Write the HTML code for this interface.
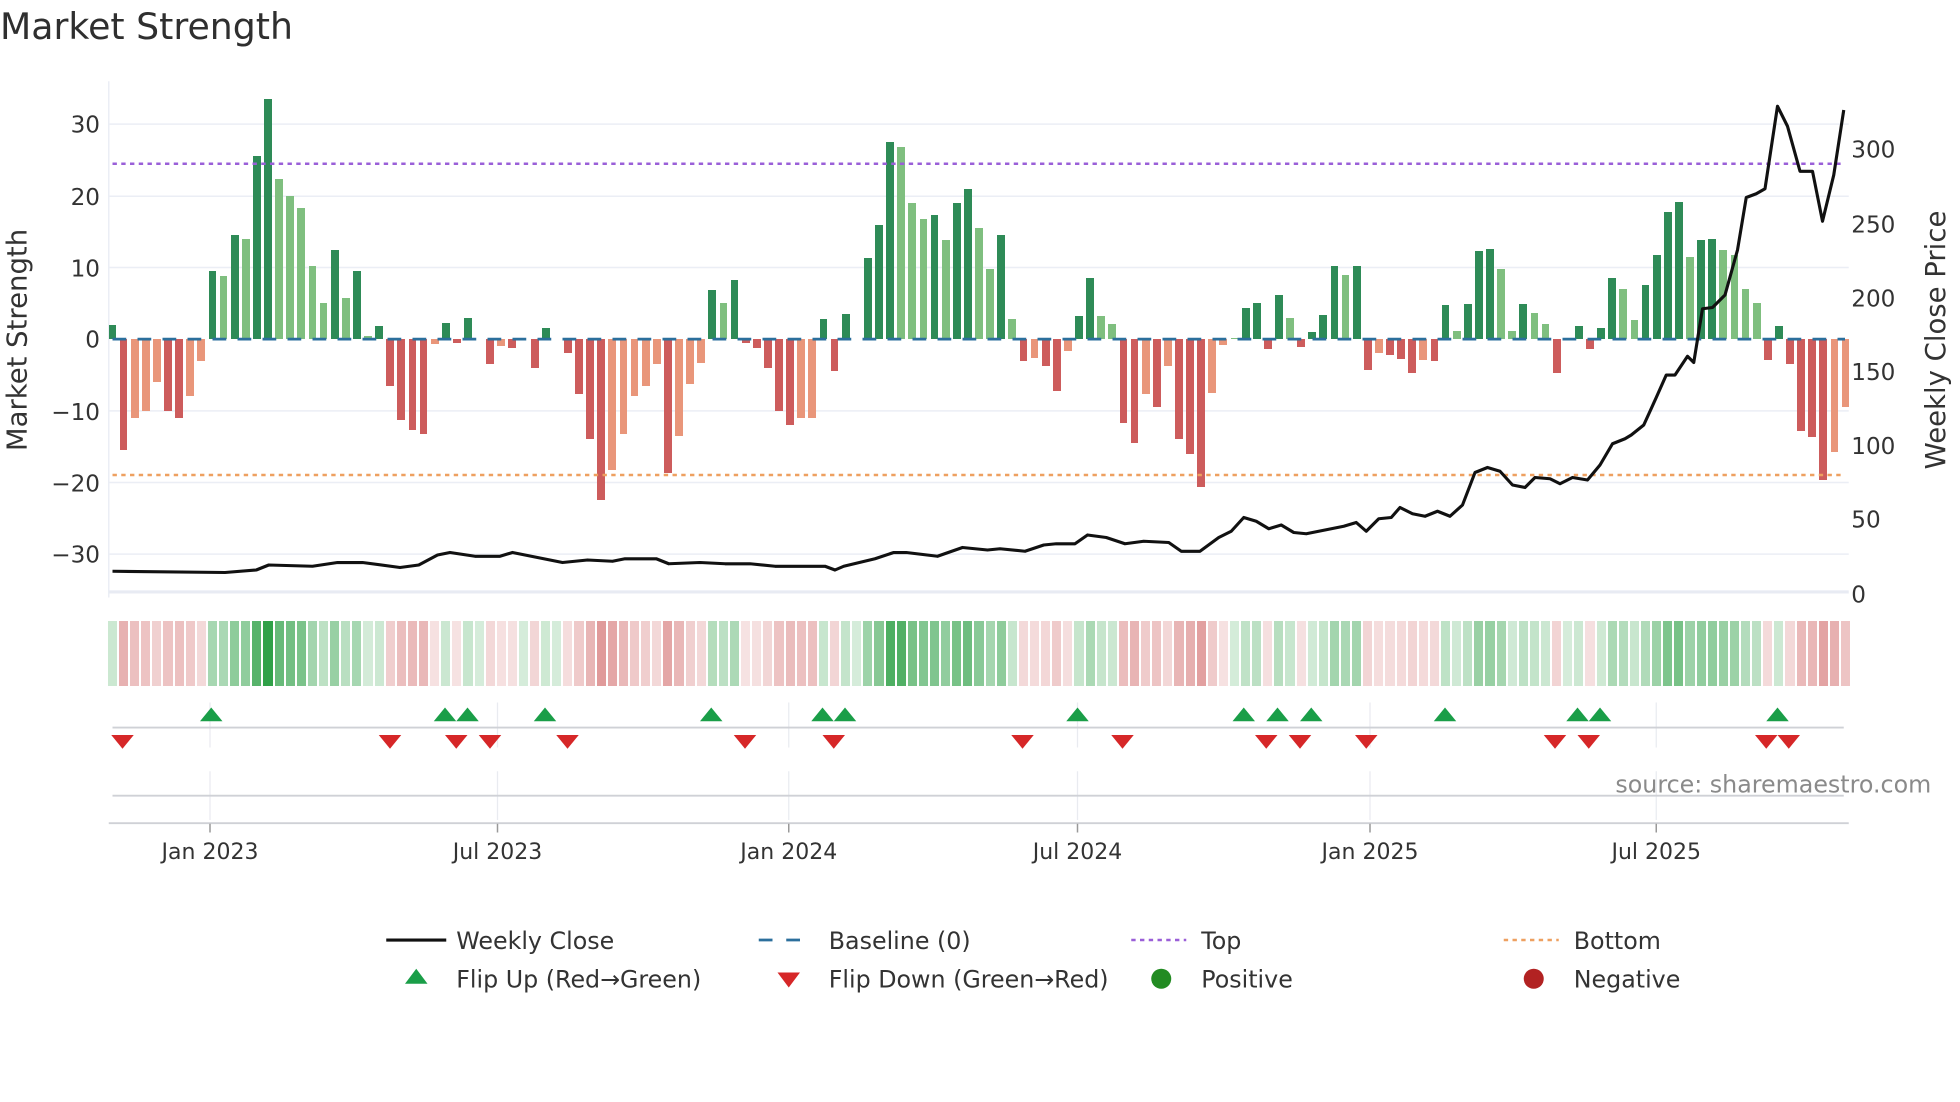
<!DOCTYPE html>
<html><head><meta charset="utf-8"><style>
html,body{margin:0;padding:0;background:#fff;}
#w{position:relative;width:1960px;height:1102px;overflow:hidden;background:#fff;}
svg{position:absolute;left:0;top:0;display:block;font-family:"DejaVu Sans","Liberation Sans",sans-serif;}
#bars{position:absolute;left:106.9px;top:339.1px;width:1743.6px;height:0;display:flex;}
#bars i{flex:1;position:relative;height:0;}
#bars i::after{content:"";position:absolute;left:50%;margin-left:-3.9px;width:7.8px;height:calc(var(--v)*7.1625px);}
#bars i.a::after,#bars i.b::after{bottom:0;}
#bars i.c::after,#bars i.e::after{top:0;}
#bars i.a::after{background:#2e8b57;}
#bars i.b::after{background:#7fbf7f;}
#bars i.c::after{background:#cd5c5c;}
#bars i.e::after{background:#e9967a;}
#bars i.z::after{display:none;}
#strip{position:absolute;left:106.9px;top:621px;width:1743.6px;height:65px;display:flex;}
#strip i{flex:1;margin:0 1px;opacity:calc(0.2 + var(--v)*0.0235);}
#strip i.a,#strip i.b,#strip i.z{background:rgb(46,160,70);}
#strip i.c,#strip i.e{background:rgb(205,92,92);opacity:calc(0.17 + var(--v)*0.02);}
</style></head><body><div id="w">
<svg width="1960" height="1102" viewBox="0 0 1568 881.6" xmlns="http://www.w3.org/2000/svg">
<text x="0" y="31" font-size="29" fill="#2f2f2f">Market Strength</text>
<g stroke="#ebeef5" stroke-width="1.2">
<line x1="87" x2="1479" y1="99.3" y2="99.3"/>
<line x1="87" x2="1479" y1="157" y2="157"/>
<line x1="87" x2="1479" y1="214" y2="214"/>
<line x1="87" x2="1479" y1="328.7" y2="328.7"/>
<line x1="87" x2="1479" y1="386" y2="386"/>
<line x1="87" x2="1479" y1="443.3" y2="443.3"/>
<line x1="87" x2="87" y1="65" y2="478"/>
</g>
<line x1="87" x2="1479" y1="473.5" y2="473.5" stroke="#e8ebf3" stroke-width="2.5"/>
<g font-size="18.5" fill="#333" text-anchor="end">
<text x="80" y="106">30</text><text x="80" y="164">20</text><text x="80" y="221">10</text>
<text x="80" y="278">0</text><text x="80" y="336">−10</text><text x="80" y="393">−20</text><text x="80" y="450">−30</text>
</g>
<g font-size="18.5" fill="#333">
<text x="1481" y="126">300</text><text x="1481" y="186">250</text><text x="1481" y="245">200</text>
<text x="1481" y="304">150</text><text x="1481" y="363">100</text><text x="1481" y="422">50</text><text x="1481" y="482">0</text>
</g>
<text transform="translate(21,272) rotate(-90)" font-size="22" fill="#333" text-anchor="middle">Market Strength</text>
<text transform="translate(1556,272) rotate(-90)" font-size="22" fill="#333" text-anchor="middle">Weekly Close Price</text>
<g stroke="#e9ebf0" stroke-width="1">
<line x1="168" x2="168" y1="562" y2="598"/><line x1="168" x2="168" y1="617" y2="656"/>
<line x1="398" x2="398" y1="562" y2="598"/><line x1="398" x2="398" y1="617" y2="656"/>
<line x1="631" x2="631" y1="562" y2="598"/><line x1="631" x2="631" y1="617" y2="656"/>
<line x1="862" x2="862" y1="562" y2="598"/><line x1="862" x2="862" y1="617" y2="656"/>
<line x1="1096" x2="1096" y1="562" y2="598"/><line x1="1096" x2="1096" y1="617" y2="656"/>
<line x1="1325" x2="1325" y1="562" y2="598"/><line x1="1325" x2="1325" y1="617" y2="656"/>
</g>
<g stroke="#cfd1d6" stroke-width="1.5">
<line x1="90" x2="1475" y1="582" y2="582"/>
<line x1="90" x2="1475" y1="636.5" y2="636.5"/>
<line x1="87" x2="1479" y1="658.5" y2="658.5"/>
</g>
<g stroke="#999" stroke-width="1.2">
<line x1="168" x2="168" y1="659" y2="666"/><line x1="398" x2="398" y1="659" y2="666"/>
<line x1="631" x2="631" y1="659" y2="666"/><line x1="862" x2="862" y1="659" y2="666"/>
<line x1="1096" x2="1096" y1="659" y2="666"/><line x1="1325" x2="1325" y1="659" y2="666"/>
</g>
<g font-size="17.6" fill="#333" text-anchor="middle">
<text x="168" y="687">Jan 2023</text><text x="398" y="687">Jul 2023</text><text x="631" y="687">Jan 2024</text>
<text x="862" y="687">Jul 2024</text><text x="1096" y="687">Jan 2025</text><text x="1325" y="687">Jul 2025</text>
</g>
<text x="1545" y="634" font-size="19" fill="#8a8a8a" text-anchor="end">source: sharemaestro.com</text>
<g font-size="19" fill="#333">
<line x1="309" x2="357" y1="752" y2="752" stroke="#111" stroke-width="2.5"/>
<text x="365" y="759">Weekly Close</text>
<line x1="607" x2="651" y1="752" y2="752" stroke="#2b6f9c" stroke-width="2.2" stroke-dasharray="11,11"/>
<text x="663" y="759">Baseline (0)</text>
<line x1="905" x2="949" y1="752" y2="752" stroke="#9a5fd8" stroke-width="2" stroke-dasharray="3.5,3.5"/>
<text x="961" y="759">Top</text>
<line x1="1203" x2="1247" y1="752" y2="752" stroke="#eea060" stroke-width="2" stroke-dasharray="3.5,3.5"/>
<text x="1259" y="759">Bottom</text>
<polygon points="324,787 342,787 333,775" fill="#1a9e48"/>
<text x="365" y="790">Flip Up (Red→Green)</text>
<polygon points="622,778 640,778 631,790" fill="#d62728"/>
<text x="663" y="790">Flip Down (Green→Red)</text>
<circle cx="929" cy="783" r="8" fill="#228b22"/>
<text x="961" y="790">Positive</text>
<circle cx="1227" cy="783" r="8" fill="#b22222"/>
<text x="1259" y="790">Negative</text>
</g>
</svg>
<div id="bars"><i class="a" style="--v:2"></i><i class="c" style="--v:15.5"></i><i class="e" style="--v:11"></i><i class="e" style="--v:10"></i><i class="e" style="--v:6"></i><i class="c" style="--v:10"></i><i class="c" style="--v:11"></i><i class="e" style="--v:8"></i><i class="e" style="--v:3"></i><i class="a" style="--v:9.5"></i><i class="b" style="--v:8.8"></i><i class="a" style="--v:14.5"></i><i class="b" style="--v:14"></i><i class="a" style="--v:25.5"></i><i class="a" style="--v:33.5"></i><i class="b" style="--v:22.3"></i><i class="b" style="--v:20"></i><i class="b" style="--v:18.3"></i><i class="b" style="--v:10.2"></i><i class="b" style="--v:5"></i><i class="a" style="--v:12.5"></i><i class="b" style="--v:5.8"></i><i class="a" style="--v:9.5"></i><i class="b" style="--v:0.5"></i><i class="a" style="--v:1.8"></i><i class="c" style="--v:6.5"></i><i class="c" style="--v:11.3"></i><i class="c" style="--v:12.7"></i><i class="c" style="--v:13.3"></i><i class="e" style="--v:0.7"></i><i class="a" style="--v:2.2"></i><i class="c" style="--v:0.5"></i><i class="a" style="--v:2.9"></i><i class="z" style="--v:0"></i><i class="c" style="--v:3.5"></i><i class="e" style="--v:0.9"></i><i class="c" style="--v:1.2"></i><i class="z" style="--v:0"></i><i class="c" style="--v:4.1"></i><i class="a" style="--v:1.5"></i><i class="z" style="--v:0"></i><i class="c" style="--v:1.9"></i><i class="c" style="--v:7.7"></i><i class="c" style="--v:14"></i><i class="c" style="--v:22.5"></i><i class="e" style="--v:18.3"></i><i class="e" style="--v:13.3"></i><i class="e" style="--v:8"></i><i class="e" style="--v:6.5"></i><i class="e" style="--v:3.5"></i><i class="c" style="--v:18.7"></i><i class="e" style="--v:13.5"></i><i class="e" style="--v:6.2"></i><i class="e" style="--v:3.4"></i><i class="a" style="--v:6.9"></i><i class="b" style="--v:5.1"></i><i class="a" style="--v:8.3"></i><i class="c" style="--v:0.6"></i><i class="c" style="--v:1.2"></i><i class="c" style="--v:4"></i><i class="c" style="--v:10"></i><i class="c" style="--v:12"></i><i class="e" style="--v:11"></i><i class="e" style="--v:11"></i><i class="a" style="--v:2.8"></i><i class="c" style="--v:4.4"></i><i class="a" style="--v:3.5"></i><i class="z" style="--v:0"></i><i class="a" style="--v:11.3"></i><i class="a" style="--v:16"></i><i class="a" style="--v:27.5"></i><i class="b" style="--v:26.8"></i><i class="b" style="--v:19"></i><i class="b" style="--v:16.8"></i><i class="a" style="--v:17.3"></i><i class="b" style="--v:13.9"></i><i class="a" style="--v:19"></i><i class="a" style="--v:21"></i><i class="b" style="--v:15.5"></i><i class="b" style="--v:9.8"></i><i class="a" style="--v:14.5"></i><i class="b" style="--v:2.8"></i><i class="c" style="--v:3.1"></i><i class="e" style="--v:2.7"></i><i class="c" style="--v:3.7"></i><i class="c" style="--v:7.3"></i><i class="e" style="--v:1.7"></i><i class="a" style="--v:3.2"></i><i class="a" style="--v:8.6"></i><i class="b" style="--v:3.2"></i><i class="b" style="--v:2.1"></i><i class="c" style="--v:11.7"></i><i class="c" style="--v:14.5"></i><i class="e" style="--v:7.6"></i><i class="c" style="--v:9.5"></i><i class="e" style="--v:3.7"></i><i class="c" style="--v:14"></i><i class="c" style="--v:16"></i><i class="c" style="--v:20.6"></i><i class="e" style="--v:7.5"></i><i class="e" style="--v:0.8"></i><i class="b" style="--v:0.2"></i><i class="a" style="--v:4.3"></i><i class="a" style="--v:5.1"></i><i class="c" style="--v:1.4"></i><i class="a" style="--v:6.2"></i><i class="b" style="--v:2.9"></i><i class="c" style="--v:1.1"></i><i class="a" style="--v:1"></i><i class="a" style="--v:3.4"></i><i class="a" style="--v:10.2"></i><i class="b" style="--v:8.9"></i><i class="a" style="--v:10.2"></i><i class="c" style="--v:4.3"></i><i class="e" style="--v:1.9"></i><i class="c" style="--v:2.2"></i><i class="c" style="--v:2.8"></i><i class="c" style="--v:4.8"></i><i class="e" style="--v:2.9"></i><i class="c" style="--v:3"></i><i class="a" style="--v:4.7"></i><i class="b" style="--v:1.2"></i><i class="a" style="--v:4.9"></i><i class="a" style="--v:12.3"></i><i class="a" style="--v:12.6"></i><i class="b" style="--v:9.8"></i><i class="b" style="--v:1.2"></i><i class="a" style="--v:4.9"></i><i class="b" style="--v:3.6"></i><i class="b" style="--v:2.1"></i><i class="c" style="--v:4.8"></i><i class="z" style="--v:0"></i><i class="a" style="--v:1.9"></i><i class="c" style="--v:1.4"></i><i class="a" style="--v:1.5"></i><i class="a" style="--v:8.6"></i><i class="b" style="--v:7"></i><i class="b" style="--v:2.7"></i><i class="a" style="--v:7.5"></i><i class="a" style="--v:11.7"></i><i class="a" style="--v:17.7"></i><i class="a" style="--v:19.1"></i><i class="b" style="--v:11.5"></i><i class="a" style="--v:13.8"></i><i class="a" style="--v:14"></i><i class="b" style="--v:12.4"></i><i class="b" style="--v:11.7"></i><i class="b" style="--v:7"></i><i class="b" style="--v:5.1"></i><i class="c" style="--v:2.9"></i><i class="a" style="--v:1.9"></i><i class="c" style="--v:3.5"></i><i class="c" style="--v:12.9"></i><i class="c" style="--v:13.6"></i><i class="c" style="--v:19.7"></i><i class="e" style="--v:15.7"></i><i class="e" style="--v:9.5"></i></div>
<div id="strip"><i class="a" style="--v:2"></i><i class="c" style="--v:15.5"></i><i class="e" style="--v:11"></i><i class="e" style="--v:10"></i><i class="e" style="--v:6"></i><i class="c" style="--v:10"></i><i class="c" style="--v:11"></i><i class="e" style="--v:8"></i><i class="e" style="--v:3"></i><i class="a" style="--v:9.5"></i><i class="b" style="--v:8.8"></i><i class="a" style="--v:14.5"></i><i class="b" style="--v:14"></i><i class="a" style="--v:25.5"></i><i class="a" style="--v:33.5"></i><i class="b" style="--v:22.3"></i><i class="b" style="--v:20"></i><i class="b" style="--v:18.3"></i><i class="b" style="--v:10.2"></i><i class="b" style="--v:5"></i><i class="a" style="--v:12.5"></i><i class="b" style="--v:5.8"></i><i class="a" style="--v:9.5"></i><i class="b" style="--v:0.5"></i><i class="a" style="--v:1.8"></i><i class="c" style="--v:6.5"></i><i class="c" style="--v:11.3"></i><i class="c" style="--v:12.7"></i><i class="c" style="--v:13.3"></i><i class="e" style="--v:0.7"></i><i class="a" style="--v:2.2"></i><i class="c" style="--v:0.5"></i><i class="a" style="--v:2.9"></i><i class="z" style="--v:0"></i><i class="c" style="--v:3.5"></i><i class="e" style="--v:0.9"></i><i class="c" style="--v:1.2"></i><i class="z" style="--v:0"></i><i class="c" style="--v:4.1"></i><i class="a" style="--v:1.5"></i><i class="z" style="--v:0"></i><i class="c" style="--v:1.9"></i><i class="c" style="--v:7.7"></i><i class="c" style="--v:14"></i><i class="c" style="--v:22.5"></i><i class="e" style="--v:18.3"></i><i class="e" style="--v:13.3"></i><i class="e" style="--v:8"></i><i class="e" style="--v:6.5"></i><i class="e" style="--v:3.5"></i><i class="c" style="--v:18.7"></i><i class="e" style="--v:13.5"></i><i class="e" style="--v:6.2"></i><i class="e" style="--v:3.4"></i><i class="a" style="--v:6.9"></i><i class="b" style="--v:5.1"></i><i class="a" style="--v:8.3"></i><i class="c" style="--v:0.6"></i><i class="c" style="--v:1.2"></i><i class="c" style="--v:4"></i><i class="c" style="--v:10"></i><i class="c" style="--v:12"></i><i class="e" style="--v:11"></i><i class="e" style="--v:11"></i><i class="a" style="--v:2.8"></i><i class="c" style="--v:4.4"></i><i class="a" style="--v:3.5"></i><i class="z" style="--v:0"></i><i class="a" style="--v:11.3"></i><i class="a" style="--v:16"></i><i class="a" style="--v:27.5"></i><i class="b" style="--v:26.8"></i><i class="b" style="--v:19"></i><i class="b" style="--v:16.8"></i><i class="a" style="--v:17.3"></i><i class="b" style="--v:13.9"></i><i class="a" style="--v:19"></i><i class="a" style="--v:21"></i><i class="b" style="--v:15.5"></i><i class="b" style="--v:9.8"></i><i class="a" style="--v:14.5"></i><i class="b" style="--v:2.8"></i><i class="c" style="--v:3.1"></i><i class="e" style="--v:2.7"></i><i class="c" style="--v:3.7"></i><i class="c" style="--v:7.3"></i><i class="e" style="--v:1.7"></i><i class="a" style="--v:3.2"></i><i class="a" style="--v:8.6"></i><i class="b" style="--v:3.2"></i><i class="b" style="--v:2.1"></i><i class="c" style="--v:11.7"></i><i class="c" style="--v:14.5"></i><i class="e" style="--v:7.6"></i><i class="c" style="--v:9.5"></i><i class="e" style="--v:3.7"></i><i class="c" style="--v:14"></i><i class="c" style="--v:16"></i><i class="c" style="--v:20.6"></i><i class="e" style="--v:7.5"></i><i class="e" style="--v:0.8"></i><i class="b" style="--v:0.2"></i><i class="a" style="--v:4.3"></i><i class="a" style="--v:5.1"></i><i class="c" style="--v:1.4"></i><i class="a" style="--v:6.2"></i><i class="b" style="--v:2.9"></i><i class="c" style="--v:1.1"></i><i class="a" style="--v:1"></i><i class="a" style="--v:3.4"></i><i class="a" style="--v:10.2"></i><i class="b" style="--v:8.9"></i><i class="a" style="--v:10.2"></i><i class="c" style="--v:4.3"></i><i class="e" style="--v:1.9"></i><i class="c" style="--v:2.2"></i><i class="c" style="--v:2.8"></i><i class="c" style="--v:4.8"></i><i class="e" style="--v:2.9"></i><i class="c" style="--v:3"></i><i class="a" style="--v:4.7"></i><i class="b" style="--v:1.2"></i><i class="a" style="--v:4.9"></i><i class="a" style="--v:12.3"></i><i class="a" style="--v:12.6"></i><i class="b" style="--v:9.8"></i><i class="b" style="--v:1.2"></i><i class="a" style="--v:4.9"></i><i class="b" style="--v:3.6"></i><i class="b" style="--v:2.1"></i><i class="c" style="--v:4.8"></i><i class="z" style="--v:0"></i><i class="a" style="--v:1.9"></i><i class="c" style="--v:1.4"></i><i class="a" style="--v:1.5"></i><i class="a" style="--v:8.6"></i><i class="b" style="--v:7"></i><i class="b" style="--v:2.7"></i><i class="a" style="--v:7.5"></i><i class="a" style="--v:11.7"></i><i class="a" style="--v:17.7"></i><i class="a" style="--v:19.1"></i><i class="b" style="--v:11.5"></i><i class="a" style="--v:13.8"></i><i class="a" style="--v:14"></i><i class="b" style="--v:12.4"></i><i class="b" style="--v:11.7"></i><i class="b" style="--v:7"></i><i class="b" style="--v:5.1"></i><i class="c" style="--v:2.9"></i><i class="a" style="--v:1.9"></i><i class="c" style="--v:3.5"></i><i class="c" style="--v:12.9"></i><i class="c" style="--v:13.6"></i><i class="c" style="--v:19.7"></i><i class="e" style="--v:15.7"></i><i class="e" style="--v:9.5"></i></div>
<svg width="1960" height="1102" viewBox="0 0 1568 881.6" xmlns="http://www.w3.org/2000/svg">
<defs>
<polygon id="up" points="-9,5 9,5 0,-6" fill="#1a9e48"/>
<polygon id="dn" points="-9,-5 9,-5 0,6" fill="#d62728"/>
</defs>
<line x1="90" x2="1476" y1="271.3" y2="271.3" stroke="#2b6f9c" stroke-width="2.2" stroke-dasharray="11,9"/>
<line x1="90" x2="1476" y1="131" y2="131" stroke="#9a5fd8" stroke-width="2" stroke-dasharray="3.5,3.5"/>
<line x1="90" x2="1476" y1="380" y2="380" stroke="#eea060" stroke-width="2" stroke-dasharray="3.5,3.5"/>
<polyline fill="none" stroke="#111" stroke-width="2.5" stroke-linejoin="round" points="90,457 180,458 205,456 215,452 250,453 270,450 290,450 320,454 335,452 350,444 360,442 380,445 400,445 410,442 430,446 450,450 470,448 490,449 500,447 525,447 535,451 560,450 580,451 600,451 620,453 640,453 660,453 668,456 675,453 700,447 715,442 725,442 750,445 770,438 790,440 800,439 820,441 835,436 845,435 860,435 870,428 885,430 900,435 915,433 935,434 945,441 960,441 975,430 985,425 995,414 1005,417 1015,423 1025,420 1035,426 1045,427 1060,424 1075,421 1085,418 1093,425 1103,415 1113,414 1120,406 1130,411 1140,413 1150,409 1160,413 1170,404 1180,378 1190,374 1200,377 1210,388 1220,390 1228,382 1240,383 1248,387 1258,382 1270,384 1280,372 1290,355 1300,351 1305,348 1315,340 1325,318 1333,300 1340,300 1350,285 1355,290 1362,247 1370,246 1380,236 1390,200 1397,158 1405,155 1412,151 1422,85 1430,101 1440,137 1450,137 1458,177 1467,140 1475,88"/>
<g transform="translate(0,572)">
<use href="#up" x="169"/><use href="#up" x="356"/><use href="#up" x="374"/><use href="#up" x="436"/><use href="#up" x="569"/><use href="#up" x="658"/><use href="#up" x="676"/><use href="#up" x="862"/><use href="#up" x="995"/><use href="#up" x="1022"/><use href="#up" x="1049"/><use href="#up" x="1156"/><use href="#up" x="1262"/><use href="#up" x="1280"/><use href="#up" x="1422"/>
</g>
<g transform="translate(0,593)">
<use href="#dn" x="98"/><use href="#dn" x="312"/><use href="#dn" x="365"/><use href="#dn" x="392"/><use href="#dn" x="454"/><use href="#dn" x="596"/><use href="#dn" x="667"/><use href="#dn" x="818"/><use href="#dn" x="898"/><use href="#dn" x="1013"/><use href="#dn" x="1040"/><use href="#dn" x="1093"/><use href="#dn" x="1244"/><use href="#dn" x="1271"/><use href="#dn" x="1413"/><use href="#dn" x="1431"/>
</g>
</svg>
</div></body></html>
